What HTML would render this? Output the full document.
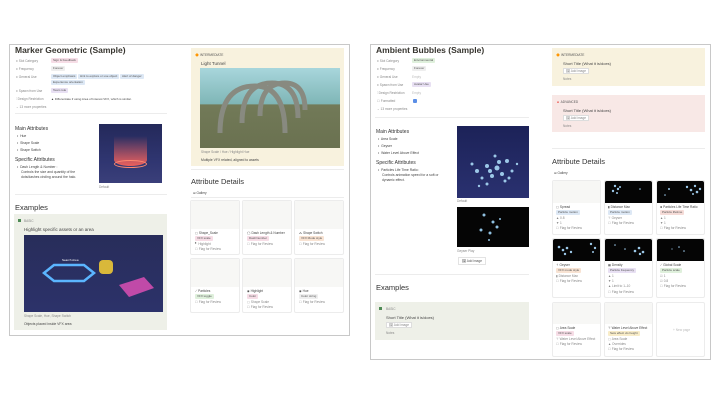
<!DOCTYPE html>
<html><head><meta charset="utf-8"><style>
*{margin:0;padding:0;box-sizing:border-box}
body{width:720px;height:405px;background:#fff;position:relative;overflow:hidden;font-family:"Liberation Sans",sans-serif;color:#37352f}
.a{position:absolute;white-space:nowrap}
.fr{position:absolute;border:1px solid #c8c8c8;background:#fff}
.t{font-weight:bold;font-size:8.5px}
.s{font-size:3.2px;color:#888}
.x{font-size:3.4px;color:#444}
.h{font-size:5px;color:#333}
.h2{font-size:7.5px;color:#333}
.tag{position:absolute;font-size:3px;padding:0 2px;height:5px;line-height:5px;border-radius:1px;color:#555}
.hr{position:absolute;height:1px;background:#ececec}
.card{position:absolute;border:1px solid #ececec;border-radius:2px;background:#fff}
.ci{position:absolute;left:0;right:0;top:0;background:#f7f7f5;border-radius:2px 2px 0 0;overflow:hidden}
.blk{background:#050505}
</style></head><body>

<!-- LEFT FRAME -->
<div class="fr" style="left:9px;top:44px;width:341px;height:292px"></div>
<div class="a t" style="left:15px;top:45px">Marker Geometric (Sample)</div>
<div class="a s" style="left:16px;top:59px">≡ Slot Category</div><div class="tag" style="left:51px;top:58px;background:#f6dde6">Sign &amp; Feedback</div>
<div class="a s" style="left:16px;top:67px">≡ Frequency</div><div class="tag" style="left:51px;top:66px;background:#eee">Forever</div>
<div class="a s" style="left:16px;top:75px">≡ General Use</div>
<div class="tag" style="left:51px;top:74px;background:#dde8f5">Object emphasis</div><div class="tag" style="left:78px;top:74px;background:#dde8f5">Hint to explore or use object</div><div class="tag" style="left:120px;top:74px;background:#dde8f5">Alert of danger</div>
<div class="tag" style="left:51px;top:80px;background:#dde8f5">Experience orientation</div>
<div class="a s" style="left:16px;top:89px">≡ Spawn from Use</div><div class="tag" style="left:51px;top:88px;background:#e8e0f3">Team role</div>
<div class="a s" style="left:16px;top:97px">⫶ Design Restriction</div><div class="a x" style="left:51px;top:97px;font-size:3px">▲ Differentiate if using Area of Interest VFX, which is similar.</div>
<div class="a s" style="left:16px;top:105px">⌄ 13 more properties</div>
<div class="hr" style="left:15px;top:113px;width:152px"></div>

<div class="a h" style="left:15px;top:126px">Main Attributes</div>
<div class="a x" style="left:17px;top:134px">•&nbsp; Hue</div>
<div class="a x" style="left:17px;top:141px">•&nbsp; Shape Scale</div>
<div class="a x" style="left:17px;top:148px">•&nbsp; Shape Switch</div>
<div class="a h" style="left:15px;top:157px">Specific Attributes</div>
<div class="a x" style="left:17px;top:165px">•&nbsp; Dash Length &amp; Number :</div>
<div class="a x" style="left:21px;top:170px">Controls the size and quantity of the</div>
<div class="a x" style="left:21px;top:175px">dots/dashes circling around the halo.</div>
<div class="a" style="left:99px;top:124px;width:63px;height:59px;background:linear-gradient(#24295a,#2f3570 60%,#3a3f7a);overflow:hidden">
<div style="position:absolute;left:15px;top:12px;width:33px;height:30px;background:linear-gradient(rgba(255,120,100,0),rgba(255,100,90,.9));border-radius:0 0 16px 16px/0 0 6px 6px"></div>
<div style="position:absolute;left:15px;top:36px;width:33px;height:8px;border:1px solid #ff8a70;border-radius:50%"></div></div>
<div class="a s" style="left:99px;top:185px">Default</div>
<div class="hr" style="left:15px;top:194px;width:152px"></div>

<div class="a h2" style="left:15px;top:203px">Examples</div>
<div class="a" style="left:14px;top:214px;width:153px;height:116px;background:#eef0e8"></div>
<div class="a" style="left:18px;top:219px;width:3px;height:3px;background:#4e8a55"></div>
<div class="a s" style="left:24px;top:219px">BASIC</div>
<div class="a x" style="left:24px;top:227px;font-size:4.5px">Highlight specific assets or an area</div>
<div class="a" style="left:24px;top:235px;width:139px;height:77px;background:linear-gradient(#282d5a,#2c326a);overflow:hidden">
<svg width="139" height="77" style="position:absolute;left:0;top:0"><polygon points="20,38 30,30 60,30 70,38 60,46 30,46" fill="none" stroke="#5bb5ff" stroke-width="2.5"/><rect x="75" y="25" width="14" height="14" rx="4" fill="#d9b83a"/><polygon points="95,50 120,42 130,53 105,62" fill="#c04aa8"/><text x="38" y="26" font-size="3" fill="#fff" font-family="Liberation Sans">Search Area</text></svg></div>
<div class="a s" style="left:24px;top:314px">Shape Scale, Hue, Shape Switch</div>
<div class="a x" style="left:24px;top:322px">Objects placed inside VFX area</div>

<div class="a" style="left:191px;top:48px;width:153px;height:118px;background:#f8f2de"></div>
<div class="a s" style="left:195px;top:53px;color:#555">🔶 INTERMEDIATE</div>
<div class="a x" style="left:201px;top:61px;font-size:4.5px">Light Tunnel</div>
<div class="a" style="left:200px;top:68px;width:140px;height:80px;background:linear-gradient(#a8d6dc,#7fb6b6 45%,#727a58 46%,#6a7150);overflow:hidden">
<svg width="140" height="80" style="position:absolute;left:0;top:0"><g fill="none" stroke="#888a80" stroke-width="5"><path d="M20,65 Q20,18 55,18 Q85,18 85,65"/><path d="M42,55 Q42,15 72,15 Q98,15 98,50"/><path d="M60,48 Q60,15 85,15 Q105,15 105,42"/></g></svg></div>
<div class="a s" style="left:201px;top:150px">Shape Scale / Hue / Highlight Hue</div>
<div class="a x" style="left:201px;top:158px">Multiple VFX related, aligned to assets</div>
<div class="hr" style="left:191px;top:169px;width:153px"></div>
<div class="a h2" style="left:191px;top:177px">Attribute Details</div>
<div class="a s" style="left:193px;top:191px;color:#444">⊞ Gallery</div>
<div class="hr" style="left:191px;top:197px;width:153px"></div>

<div class="card" style="left:190px;top:200px;width:50px;height:55px"><div class="ci" style="height:28px"></div><div class="a s" style="left:4px;top:30px;color:#444">▢ Shape_Scale</div><div class="tag" style="left:4px;top:35px;background:#f6dde6">VFX scale</div><div class="a s" style="left:4px;top:41px">▘ Highlight</div><div class="a s" style="left:4px;top:46px">☐ Flag for Review</div></div>
<div class="card" style="left:242px;top:200px;width:50px;height:55px"><div class="ci" style="height:28px"></div><div class="a s" style="left:4px;top:30px;color:#444">◯ Dash Length &amp; Number</div><div class="tag" style="left:4px;top:35px;background:#f6dde6">Dash/number</div><div class="a s" style="left:4px;top:41px">☐ Flag for Review</div></div>
<div class="card" style="left:294px;top:200px;width:50px;height:55px"><div class="ci" style="height:28px"></div><div class="a s" style="left:4px;top:30px;color:#444">⁂ Shape Switch</div><div class="tag" style="left:4px;top:35px;background:#f8e3d3">VFX Mode style</div><div class="a s" style="left:4px;top:41px">☐ Flag for Review</div></div>
<div class="card" style="left:190px;top:258px;width:50px;height:55px"><div class="ci" style="height:28px"></div><div class="a s" style="left:4px;top:30px;color:#444">⟋ Particles</div><div class="tag" style="left:4px;top:35px;background:#dff0dc">VFX toggle</div><div class="a s" style="left:4px;top:41px">☐ Flag for Review</div></div>
<div class="card" style="left:242px;top:258px;width:50px;height:55px"><div class="ci" style="height:28px"></div><div class="a s" style="left:4px;top:30px;color:#444">◉ Highlight</div><div class="tag" style="left:4px;top:35px;background:#f6dde6">Color</div><div class="a s" style="left:4px;top:41px">▢ Shape Scale</div><div class="a s" style="left:4px;top:46px">☐ Flag for Review</div></div>
<div class="card" style="left:294px;top:258px;width:50px;height:55px"><div class="ci" style="height:28px"></div><div class="a s" style="left:4px;top:30px;color:#444">◉ Hue</div><div class="tag" style="left:4px;top:35px;background:#eee">Color string</div><div class="a s" style="left:4px;top:41px">☐ Flag for Review</div></div>

<!-- RIGHT FRAME -->
<div class="fr" style="left:370px;top:44px;width:341px;height:316px"></div>
<div class="a t" style="left:376px;top:45px">Ambient Bubbles (Sample)</div>
<div class="a s" style="left:377px;top:59px">≡ Slot Category</div><div class="tag" style="left:412px;top:58px;background:#dff0dc">Environmental</div>
<div class="a s" style="left:377px;top:67px">≡ Frequency</div><div class="tag" style="left:412px;top:66px;background:#eee">Forever</div>
<div class="a s" style="left:377px;top:75px">≡ General Use</div><div class="a s" style="left:412px;top:75px;color:#bbb">Empty</div>
<div class="a s" style="left:377px;top:83px">≡ Spawn from Use</div><div class="tag" style="left:412px;top:82px;background:#e8e0f3">Avatar Use</div>
<div class="a s" style="left:377px;top:91px">⫶ Design Restriction</div><div class="a s" style="left:412px;top:91px;color:#bbb">Empty</div>
<div class="a s" style="left:377px;top:99px">☐ Formatted</div><div class="a" style="left:413px;top:99px;width:4px;height:4px;background:#5b8ee6;border-radius:1px"></div>
<div class="a s" style="left:377px;top:107px">⌄ 13 more properties</div>
<div class="hr" style="left:375px;top:117px;width:154px"></div>

<div class="a h" style="left:376px;top:129px">Main Attributes</div>
<div class="a x" style="left:378px;top:137px">•&nbsp; Area Scale</div>
<div class="a x" style="left:378px;top:144px">•&nbsp; Geyser</div>
<div class="a x" style="left:378px;top:151px">•&nbsp; Water Level Above Effect</div>
<div class="a h" style="left:376px;top:160px">Specific Attributes</div>
<div class="a x" style="left:378px;top:168px">•&nbsp; Particles Life Time Ratio:</div>
<div class="a x" style="left:382px;top:173px">Controls animation speed for a soft or</div>
<div class="a x" style="left:382px;top:178px">dynamic effect.</div>
<div class="a" style="left:457px;top:126px;width:72px;height:72px;background:linear-gradient(#1c2258,#2a3170);overflow:hidden">
<svg width="72" height="72"><g fill="#9cc8e8"><circle cx="20" cy="45" r="2"/><circle cx="30" cy="40" r="2"/><circle cx="40" cy="42" r="2.5"/><circle cx="50" cy="35" r="2"/><circle cx="35" cy="50" r="2"/><circle cx="45" cy="48" r="2"/><circle cx="25" cy="52" r="1.5"/><circle cx="55" cy="45" r="1.5"/><circle cx="38" cy="30" r="1.5"/><circle cx="48" cy="55" r="1.5"/><circle cx="30" cy="58" r="1.5"/><circle cx="15" cy="38" r="1.5"/><circle cx="42" cy="36" r="2"/><circle cx="33" cy="45" r="2"/><circle cx="52" cy="52" r="1.5"/><circle cx="22" cy="60" r="1.2"/><circle cx="60" cy="38" r="1.2"/></g></svg></div>
<div class="a s" style="left:457px;top:199px">Default</div>
<div class="a blk" style="left:457px;top:207px;width:72px;height:40px;overflow:hidden">
<svg width="72" height="40"><g fill="#8fc0e0"><circle cx="27" cy="8" r="1.5"/><circle cx="36" cy="15" r="1.5"/><circle cx="40" cy="20" r="1.5"/><circle cx="24" cy="23" r="1.5"/><circle cx="33" cy="26" r="1.5"/><circle cx="32" cy="33" r="1"/><circle cx="43" cy="12" r="1"/></g></svg></div>
<div class="a s" style="left:457px;top:249px">Geyser Play</div>
<div class="a s" style="left:458px;top:257px;border:1px solid #e3e3e3;padding:1px 3px;color:#555">🖼 Add image</div>
<div class="hr" style="left:375px;top:274px;width:154px"></div>
<div class="a h2" style="left:376px;top:283px">Examples</div>
<div class="a" style="left:375px;top:302px;width:154px;height:38px;background:#eef0e8"></div>
<div class="a" style="left:379px;top:307px;width:3px;height:3px;background:#4e8a55"></div>
<div class="a s" style="left:386px;top:307px">BASIC</div>
<div class="a x" style="left:386px;top:315px;font-size:4px">Short Title (What it is/does)</div>
<div class="a s" style="left:386px;top:322px;border:1px solid #ddd;padding:0 2px;background:#fff">🖼 Add image</div>
<div class="a s" style="left:386px;top:331px">Notes</div>

<div class="a" style="left:552px;top:48px;width:153px;height:38px;background:#f8f2de"></div>
<div class="a s" style="left:556px;top:53px;color:#555">🔶 INTERMEDIATE</div>
<div class="a x" style="left:563px;top:61px;font-size:4px">Short Title (What it is/does)</div>
<div class="a s" style="left:563px;top:68px;border:1px solid #ddd;padding:0 2px;background:#fff">🖼 Add image</div>
<div class="a s" style="left:563px;top:77px">Notes</div>
<div class="a" style="left:552px;top:95px;width:153px;height:37px;background:#f8e8e6"></div>
<div class="a s" style="left:556px;top:100px;color:#555">🔺 ADVANCED</div>
<div class="a x" style="left:563px;top:108px;font-size:4px">Short Title (What it is/does)</div>
<div class="a s" style="left:563px;top:115px;border:1px solid #ddd;padding:0 2px;background:#fff">🖼 Add image</div>
<div class="a s" style="left:563px;top:124px">Notes</div>
<div class="hr" style="left:552px;top:148px;width:153px"></div>
<div class="a h2" style="left:552px;top:157px">Attribute Details</div>
<div class="a s" style="left:554px;top:171px;color:#444">⊞ Gallery</div>

<div class="card" style="left:552px;top:180px;width:49px;height:55px"><div class="ci" style="height:22px"></div><div class="a s" style="left:3px;top:24px;color:#444">▢ Spread</div><div class="tag" style="left:3px;top:29px;background:#dde8f5">Particle motion</div><div class="a s" style="left:3px;top:35px">▲ 0.8</div><div class="a s" style="left:3px;top:40px">▼ 1</div><div class="a s" style="left:3px;top:45px">☐ Flag for Review</div></div>
<div class="card" style="left:604px;top:180px;width:49px;height:55px"><div class="ci blk" style="height:22px"><svg width="49" height="22"><g fill="#9cc8e8"><circle cx="10" cy="5" r="1.2"/><circle cx="13" cy="8" r="1.2"/><circle cx="8" cy="10" r="1.2"/><circle cx="12" cy="12" r="1"/><circle cx="15" cy="6" r="1"/><circle cx="35" cy="8" r="0.8"/></g></svg></div><div class="a s" style="left:3px;top:24px;color:#444">▮ Distance Max</div><div class="tag" style="left:3px;top:29px;background:#dde8f5">Particle motion</div><div class="a s" style="left:3px;top:35px">⊤ Geyser</div><div class="a s" style="left:3px;top:40px">☐ Flag for Review</div></div>
<div class="card" style="left:656px;top:180px;width:49px;height:55px"><div class="ci blk" style="height:22px"><svg width="49" height="22"><g fill="#9cc8e8"><circle cx="30" cy="6" r="1.2"/><circle cx="34" cy="9" r="1.3"/><circle cx="38" cy="5" r="1.2"/><circle cx="40" cy="11" r="1.3"/><circle cx="36" cy="13" r="1"/><circle cx="43" cy="8" r="1.2"/><circle cx="12" cy="8" r="1"/><circle cx="8" cy="14" r="0.8"/></g></svg></div><div class="a s" style="left:3px;top:24px;color:#444">⧗ Particles Life Time Ratio</div><div class="tag" style="left:3px;top:29px;background:#f6dcd8">Particle lifetime</div><div class="a s" style="left:3px;top:35px">▲ 1</div><div class="a s" style="left:3px;top:40px">▼ 1</div><div class="a s" style="left:3px;top:45px">☐ Flag for Review</div></div>
<div class="card" style="left:552px;top:238px;width:49px;height:60px"><div class="ci blk" style="height:22px"><svg width="49" height="22"><g fill="#9cc8e8"><circle cx="6" cy="8" r="1.3"/><circle cx="10" cy="11" r="1.3"/><circle cx="14" cy="9" r="1.3"/><circle cx="18" cy="13" r="1.2"/><circle cx="12" cy="15" r="1.2"/><circle cx="38" cy="5" r="1.2"/><circle cx="42" cy="9" r="1.2"/><circle cx="40" cy="13" r="1"/></g></svg></div><div class="a s" style="left:3px;top:24px;color:#444">⇡ Geyser</div><div class="tag" style="left:3px;top:29px;background:#f8e3d3">VFX mode style</div><div class="a s" style="left:3px;top:35px">▮ Distance Max</div><div class="a s" style="left:3px;top:40px">☐ Flag for Review</div></div>
<div class="card" style="left:604px;top:238px;width:49px;height:60px"><div class="ci blk" style="height:22px"><svg width="49" height="22"><g fill="#9cc8e8"><circle cx="30" cy="12" r="1.3"/><circle cx="34" cy="9" r="1.3"/><circle cx="38" cy="13" r="1.3"/><circle cx="35" cy="15" r="1.2"/><circle cx="10" cy="6" r="0.8"/><circle cx="20" cy="10" r="0.8"/></g></svg></div><div class="a s" style="left:3px;top:24px;color:#444">▦ Density</div><div class="tag" style="left:3px;top:29px;background:#e8e0f3">Particle frequency</div><div class="a s" style="left:3px;top:35px">▲ 1</div><div class="a s" style="left:3px;top:40px">▼ 1</div><div class="a s" style="left:3px;top:45px">▲ Limit to 1–10</div><div class="a s" style="left:3px;top:51px">☐ Flag for Review</div></div>
<div class="card" style="left:656px;top:238px;width:49px;height:60px"><div class="ci blk" style="height:22px"><svg width="49" height="22"><g fill="#9cc8e8"><circle cx="22" cy="8" r="0.8"/><circle cx="27" cy="12" r="0.8"/><circle cx="15" cy="10" r="0.6"/></g></svg></div><div class="a s" style="left:3px;top:24px;color:#444">⟋ Global Scale</div><div class="tag" style="left:3px;top:29px;background:#dff0dc">Particle scale</div><div class="a s" style="left:3px;top:35px">☑ 1</div><div class="a s" style="left:3px;top:40px">☑ 0.8</div><div class="a s" style="left:3px;top:45px">☐ Flag for Review</div></div>
<div class="card" style="left:552px;top:302px;width:49px;height:55px"><div class="ci" style="height:21px"></div><div class="a s" style="left:3px;top:23px;color:#444">▢ Area Scale</div><div class="tag" style="left:3px;top:28px;background:#f6dde6">VFX scale</div><div class="a s" style="left:3px;top:34px">⊤ Water Level Above Effect</div><div class="a s" style="left:3px;top:39px">☐ Flag for Review</div></div>
<div class="card" style="left:604px;top:302px;width:49px;height:55px"><div class="ci" style="height:21px"></div><div class="a s" style="left:3px;top:23px;color:#444">⊤ Water Level Above Effect</div><div class="tag" style="left:3px;top:28px;background:#f8ecc8">Sets effect vis height</div><div class="a s" style="left:3px;top:34px">▢ Area Scale</div><div class="a s" style="left:3px;top:39px">▲ Overrides</div><div class="a s" style="left:3px;top:44px">☐ Flag for Review</div></div>
<div class="card" style="left:656px;top:302px;width:49px;height:55px"><div class="a s" style="left:16px;top:25px;color:#bbb">+ New page</div></div>
</body></html>
